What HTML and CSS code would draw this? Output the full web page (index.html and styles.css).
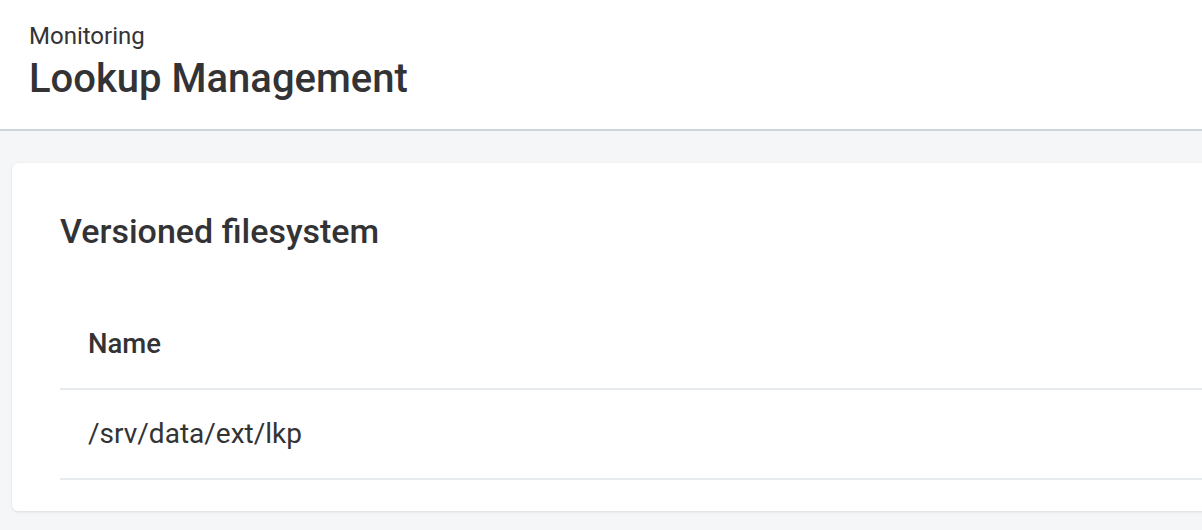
FILE: index.html
```html
<!DOCTYPE html>
<html>
<head>
<meta charset="utf-8">
<link rel="stylesheet" href="styles.css">
</head>
<body>
<header class="page-header">
  <div class="crumb">Monitoring</div>
  <h1 class="page-title">Lookup Management</h1>
</header>
<main class="content">
  <section class="card">
    <h2 class="card-title">Versioned filesystem</h2>
    <table class="table">
      <thead>
        <tr><th>Name</th></tr>
      </thead>
      <tbody>
        <tr><td>/srv/data/ext/lkp</td></tr>
      </tbody>
    </table>
  </section>
</main>
</body>
</html>
```

FILE: styles.css
```css
html, body {
  margin: 0;
  padding: 0;
  height: 100%;
  overflow: hidden;
}
body {
  font-family: Roboto, "Liberation Sans", sans-serif;
  color: #333336;
  background: #f5f6f8;
}
.page-header {
  background: #ffffff;
  border-bottom: 2px solid #ccd5d9;
  padding: 22px 29px 26px;
  display: flex;
  flex-direction: column;
  gap: 5px;
}
.crumb {
  font-size: 24px;
  line-height: 28px;
  font-weight: 400;
  color: #333336;
}
.page-title {
  margin: 0;
  font-size: 40px;
  line-height: 48px;
  font-weight: 500;
  color: #333336;
}
.content {
  padding: 32px 0 0 12px;
}
.card {
  background: #ffffff;
  border-radius: 6px;
  box-shadow: 0 1px 3px rgba(0, 0, 0, 0.10), 0 0 1px rgba(0, 0, 0, 0.06);
  margin-right: -30px;
  padding: 48px 0 31px 48px;
}
.card-title {
  margin: 0 0 49px;
  font-size: 34px;
  line-height: 40px;
  font-weight: 500;
  color: #333336;
}
.table {
  width: 100%;
  border-collapse: collapse;
}
.table th,
.table td {
  text-align: left;
  padding: 28px 28px;
  line-height: 32px;
  border-bottom: 2px solid #e8ebee;
}
.table th {
  font-size: 27.5px;
  font-weight: 500;
}
.table td {
  font-size: 28px;
  font-weight: 400;
}
```
